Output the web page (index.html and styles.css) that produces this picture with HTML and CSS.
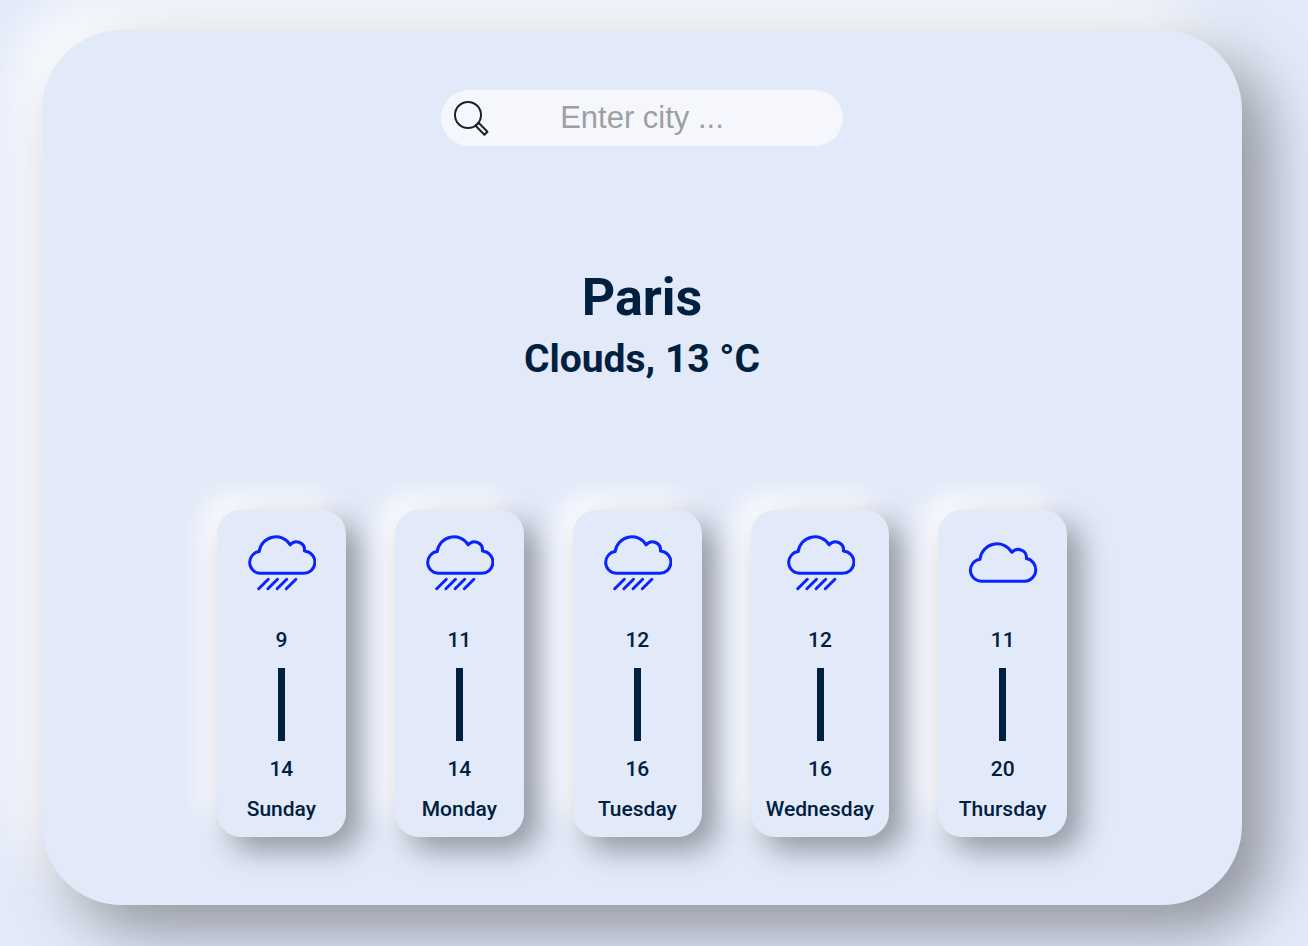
FILE: index.html
```html
<!DOCTYPE html>
<html lang="en">
<head>
<meta charset="utf-8">
<title>Weather</title>
<link rel="stylesheet" href="styles.css">
</head>
<body>
<svg class="sprite" aria-hidden="true">
  <symbol id="rain" viewBox="0 0 70 86">
    <path d="M13.2 25.6A10.9 10.9 0 0 0 14 47.3H57A11.2 11.2 0 0 0 58.4 24.9A8 8 0 0 0 44.2 18.9A16.8 16.8 0 0 0 13.2 25.6Z"/>
    <path d="M12.7 62.7L22.3 53.3M21.9 62.7L31.5 53.3M31.1 62.7L40.7 53.3M40.3 62.7L49.9 53.3"/>
  </symbol>
  <symbol id="cloud" viewBox="0 0 70 86">
    <path d="M12 33.3A11 11 0 0 0 13 55.2H57A11.4 11.4 0 0 0 58.4 32.6A8.2 8.2 0 0 0 44 26.4A17.2 17.2 0 0 0 12 33.3Z"/>
  </symbol>
</svg>
<main class="panel">
  <form class="search">
    <svg class="search-icon" viewBox="0 0 36 36" aria-hidden="true">
      <circle cx="15" cy="15" r="13"/>
      <path d="M22.6 25.8L25.6 22.8L34.4 31.8L31.4 34.8Z"/>
    </svg>
    <input class="search-input" type="text" aria-label="City" placeholder="Enter city ...">
  </form>
  <header class="current">
    <h1 class="city">Paris</h1>
    <h2 class="conditions">Clouds, 13 °C</h2>
  </header>
  <section class="forecast" aria-label="Forecast">
    <article class="day">
      <svg class="icon" aria-hidden="true"><use href="#rain"/></svg>
      <span>9</span><div class="bar"></div><span>14</span><span>Sunday</span>
    </article>
    <article class="day">
      <svg class="icon" aria-hidden="true"><use href="#rain"/></svg>
      <span>11</span><div class="bar"></div><span>14</span><span>Monday</span>
    </article>
    <article class="day">
      <svg class="icon" aria-hidden="true"><use href="#rain"/></svg>
      <span>12</span><div class="bar"></div><span>16</span><span>Tuesday</span>
    </article>
    <article class="day">
      <svg class="icon" aria-hidden="true"><use href="#rain"/></svg>
      <span>12</span><div class="bar"></div><span>16</span><span>Wednesday</span>
    </article>
    <article class="day">
      <svg class="icon" aria-hidden="true"><use href="#cloud"/></svg>
      <span>11</span><div class="bar"></div><span>20</span><span>Thursday</span>
    </article>
  </section>
</main>
</body>
</html>
```
FILE: styles.css
```css
* {
  box-sizing: border-box;
}

body {
  margin: 0;
  padding: 30px 66px 41px 42px;
  background: #e2e9f8;
  color: #00203f;
  font-family: Roboto, sans-serif;
}

.sprite {
  position: absolute;
  width: 0;
  height: 0;
}

.panel {
  display: flex;
  flex-direction: column;
  align-items: center;
  padding: 60px 24px 68px;
  border-radius: 80px;
  background: #e2e9f8;
  box-shadow: 26px 26px 60px rgba(0, 0, 0, 0.37), -26px -26px 60px #fff;
}

.search {
  display: flex;
  align-items: center;
  width: 402px;
  max-width: 100%;
  height: 56px;
  padding: 0 12px;
  border-radius: 28px;
  background: #f5f7fd;
}

.search-icon {
  flex: none;
  width: 36px;
  height: 36px;
  fill: none;
  stroke: #1b2329;
  stroke-width: 2;
  stroke-linejoin: round;
}

.search-input {
  flex: 1;
  min-width: 0;
  padding: 0 36px 0 0;
  border: 0;
  outline: 0;
  background: none;
  color: #00203f;
  font: 31px "Liberation Sans", Arial, sans-serif;
  text-align: center;
}

.search-input::placeholder {
  color: #9d9fa4;
}

.current {
  margin: 120px 0 126px;
  text-align: center;
}

.city,
.conditions {
  margin: 0;
  font-weight: 700;
}

.city {
  font-size: 52px;
  line-height: 64px;
}

.conditions {
  margin-top: 4px;
  font-size: 39px;
  line-height: 50px;
}

.forecast {
  display: flex;
  flex-wrap: wrap;
  justify-content: center;
  gap: 49px;
}

.day {
  display: flex;
  flex-direction: column;
  align-items: center;
  gap: 16px;
  min-width: 129px;
  padding: 16px 15px;
  border-radius: 24px;
  background: #e2e9f8;
  box-shadow: 13px 13px 30px rgba(0, 0, 0, 0.37), -13px -13px 30px #fff;
  font-size: 21px;
  font-weight: 500;
  line-height: 24px;
}

.icon {
  width: 70px;
  height: 86px;
  fill: none;
  stroke: #0a24ff;
  stroke-width: 3;
  stroke-linecap: round;
  stroke-linejoin: round;
}

.bar {
  width: 7px;
  height: 73px;
  background: #00203f;
}
```
